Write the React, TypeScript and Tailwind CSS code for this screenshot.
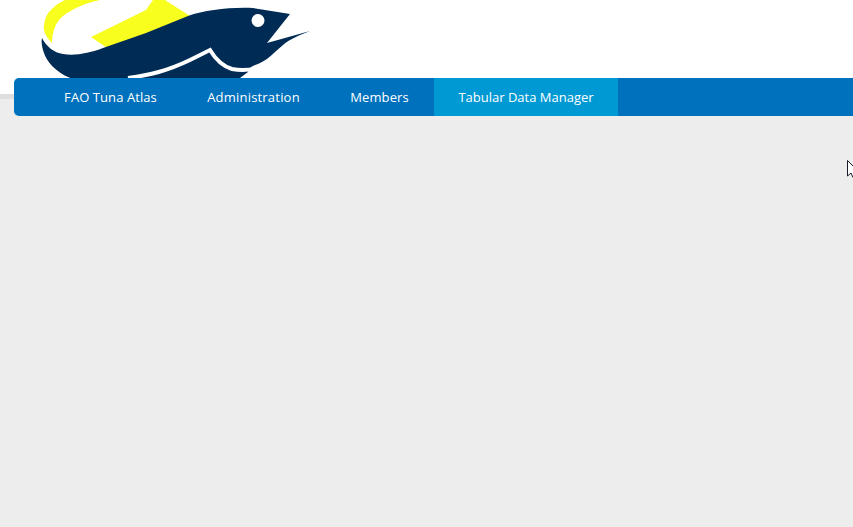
import React from 'react';

const menuItems = [
  { label: 'FAO Tuna Atlas', className: 'w-[143px] tracking-[0.08px]', active: false },
  { label: 'Administration', className: 'w-[143px] tracking-[0.2px]', active: false },
  { label: 'Members', className: 'w-[109px] tracking-[0.1px]', active: false },
  { label: 'Tabular Data Manager', className: 'w-[184px]', active: true },
];

function FishLogo() {
  return (
    <svg width="330" height="94" viewBox="0 0 330 94" className="block">
      {/* yellow swoosh and tail */}
      <path d="M52 43C46 37 43 31 44 25C45 17 48 12 53 8C57 4 61 2 65 0L100 0C86 3 75 8 67 13C60 18 57 22 55 27C53 32 52 37 52 43Z" fill="#f8ff1e" />
      <path d="M91 37L146 10L153 0L165 0L190 16L113 52Z" fill="#f8ff1e" />
      {/* fish body */}
      <path
        d="M42 38C46 46 54 53 63 54C75 56 90 53 103 48L146 33L188 16C205 10 230 7 253 8L290 14L267 43L310 31C300 35 290 39 283 45L275 52C270 57 265 61 258 64C252 66 250 67 248 72L240 78L70 78C55 72 46 60 44 53C42 47 41 42 42 38Z"
        fill="#002b55"
      />
      <path
        d="M128 78C150 75 167 71 190 60C198 56 204 53 210 50C216 60 222 66 232 69C242 71 252 70 262 67"
        fill="none"
        stroke="#ffffff"
        strokeWidth="4"
      />
      <path d="M59 75L69 78" fill="none" stroke="#ffffff" strokeWidth="1" />
      <ellipse cx="258" cy="20.5" rx="6.5" ry="6.5" fill="#ffffff" />
    </svg>
  );
}

export default function App() {
  return (
    <div className="relative min-h-screen overflow-hidden bg-[#ededed] font-['Open_Sans','Noto_Sans',sans-serif]">
      <header className="h-[94px] bg-white">
        <FishLogo />
      </header>
      <div className="h-[5px] bg-[#dedede]" />

      <nav className="relative -mt-[21px] ml-[14px] flex h-[38px] rounded-l-[5px] bg-[#0071bc] pl-[25px]">
        {menuItems.map(item => (
          <a
            key={item.label}
            className={`flex items-center justify-center pt-[1px] text-[13px] font-medium text-white ${item.className} ${item.active ? 'bg-[#0099d3]' : ''}`}
          >
            {item.label}
          </a>
        ))}
      </nav>

      {/* mouse pointer left in the capture */}
      <svg width="8" height="19" viewBox="0 0 8 19" className="absolute left-[847px] top-[160px]">
        <path d="M0.5 0.5L0.5 16L4 13L6 17.5L8 17L8 8Z" fill="#ffffff" stroke="#1a1a2a" strokeWidth="1" />
      </svg>
    </div>
  );
}
